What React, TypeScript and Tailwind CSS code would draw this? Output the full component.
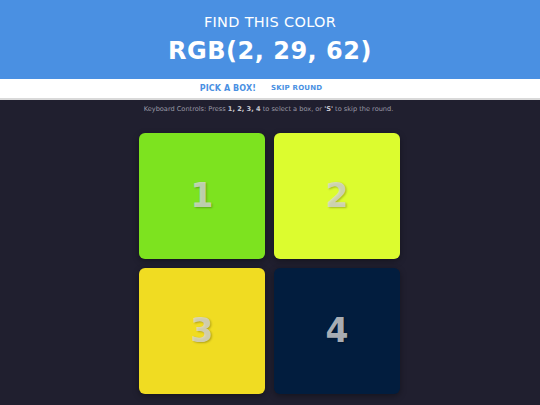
const boxes = [
  { n: 1, color: "bg-[#7de31f]" },
  { n: 2, color: "bg-[#dcfc2f]" },
  { n: 3, color: "bg-[#f0dc22]" },
  { n: 4, color: "bg-[#021d3e]" },
];

export default function App() {
  return (
    <div className="min-h-[405px] bg-[#201f2f] font-['DejaVu_Sans',sans-serif]">
      <header className="flex h-[79px] flex-col items-center bg-[#4a90e2] pt-[13px] text-white">
        <h2 className="text-[14.5px] leading-[18px] tracking-[0.3px]">FIND THIS COLOR</h2>
        <h1 className="mt-[5px] text-[24px] font-bold leading-[30px] tracking-[0.5px]">
          RGB(2, 29, 62)
        </h1>
      </header>

      <nav className="flex h-[21px] items-center justify-center gap-[15px] border-b-[2px] border-[#d9d9d9] bg-white pr-[18px] font-bold text-[#4a90e2]">
        <span className="text-[8px] tracking-[0.1px]">PICK A BOX!</span>
        <button className="text-[7px] tracking-[0.2px]">SKIP ROUND</button>
      </nav>

      <p className="mt-[5px] pr-[3px] text-center text-[6.6px] leading-[9px] text-[#9a9aa6]">
        Keyboard Controls: Press <b className="text-[#c8c8d0]">1, 2, 3, 4</b> to select a box, or{" "}
        <b className="text-[#c8c8d0]">'S'</b> to skip the round.
      </p>

      <main className="mt-[19px] grid grid-cols-[126px_126px] justify-center gap-[9px] pr-[1px]">
        {boxes.map((b) => (
          <div
            key={b.n}
            className={`${b.color} flex h-[126px] items-center justify-center rounded-[6px] shadow-[0_2px_6px_rgba(0,0,0,0.35)]`}
          >
            <span className="text-[33px] font-bold text-[rgba(215,215,215,0.8)] [text-shadow:1px_1px_2px_rgba(0,0,0,0.25)]">
              {b.n}
            </span>
          </div>
        ))}
      </main>
    </div>
  );
}
